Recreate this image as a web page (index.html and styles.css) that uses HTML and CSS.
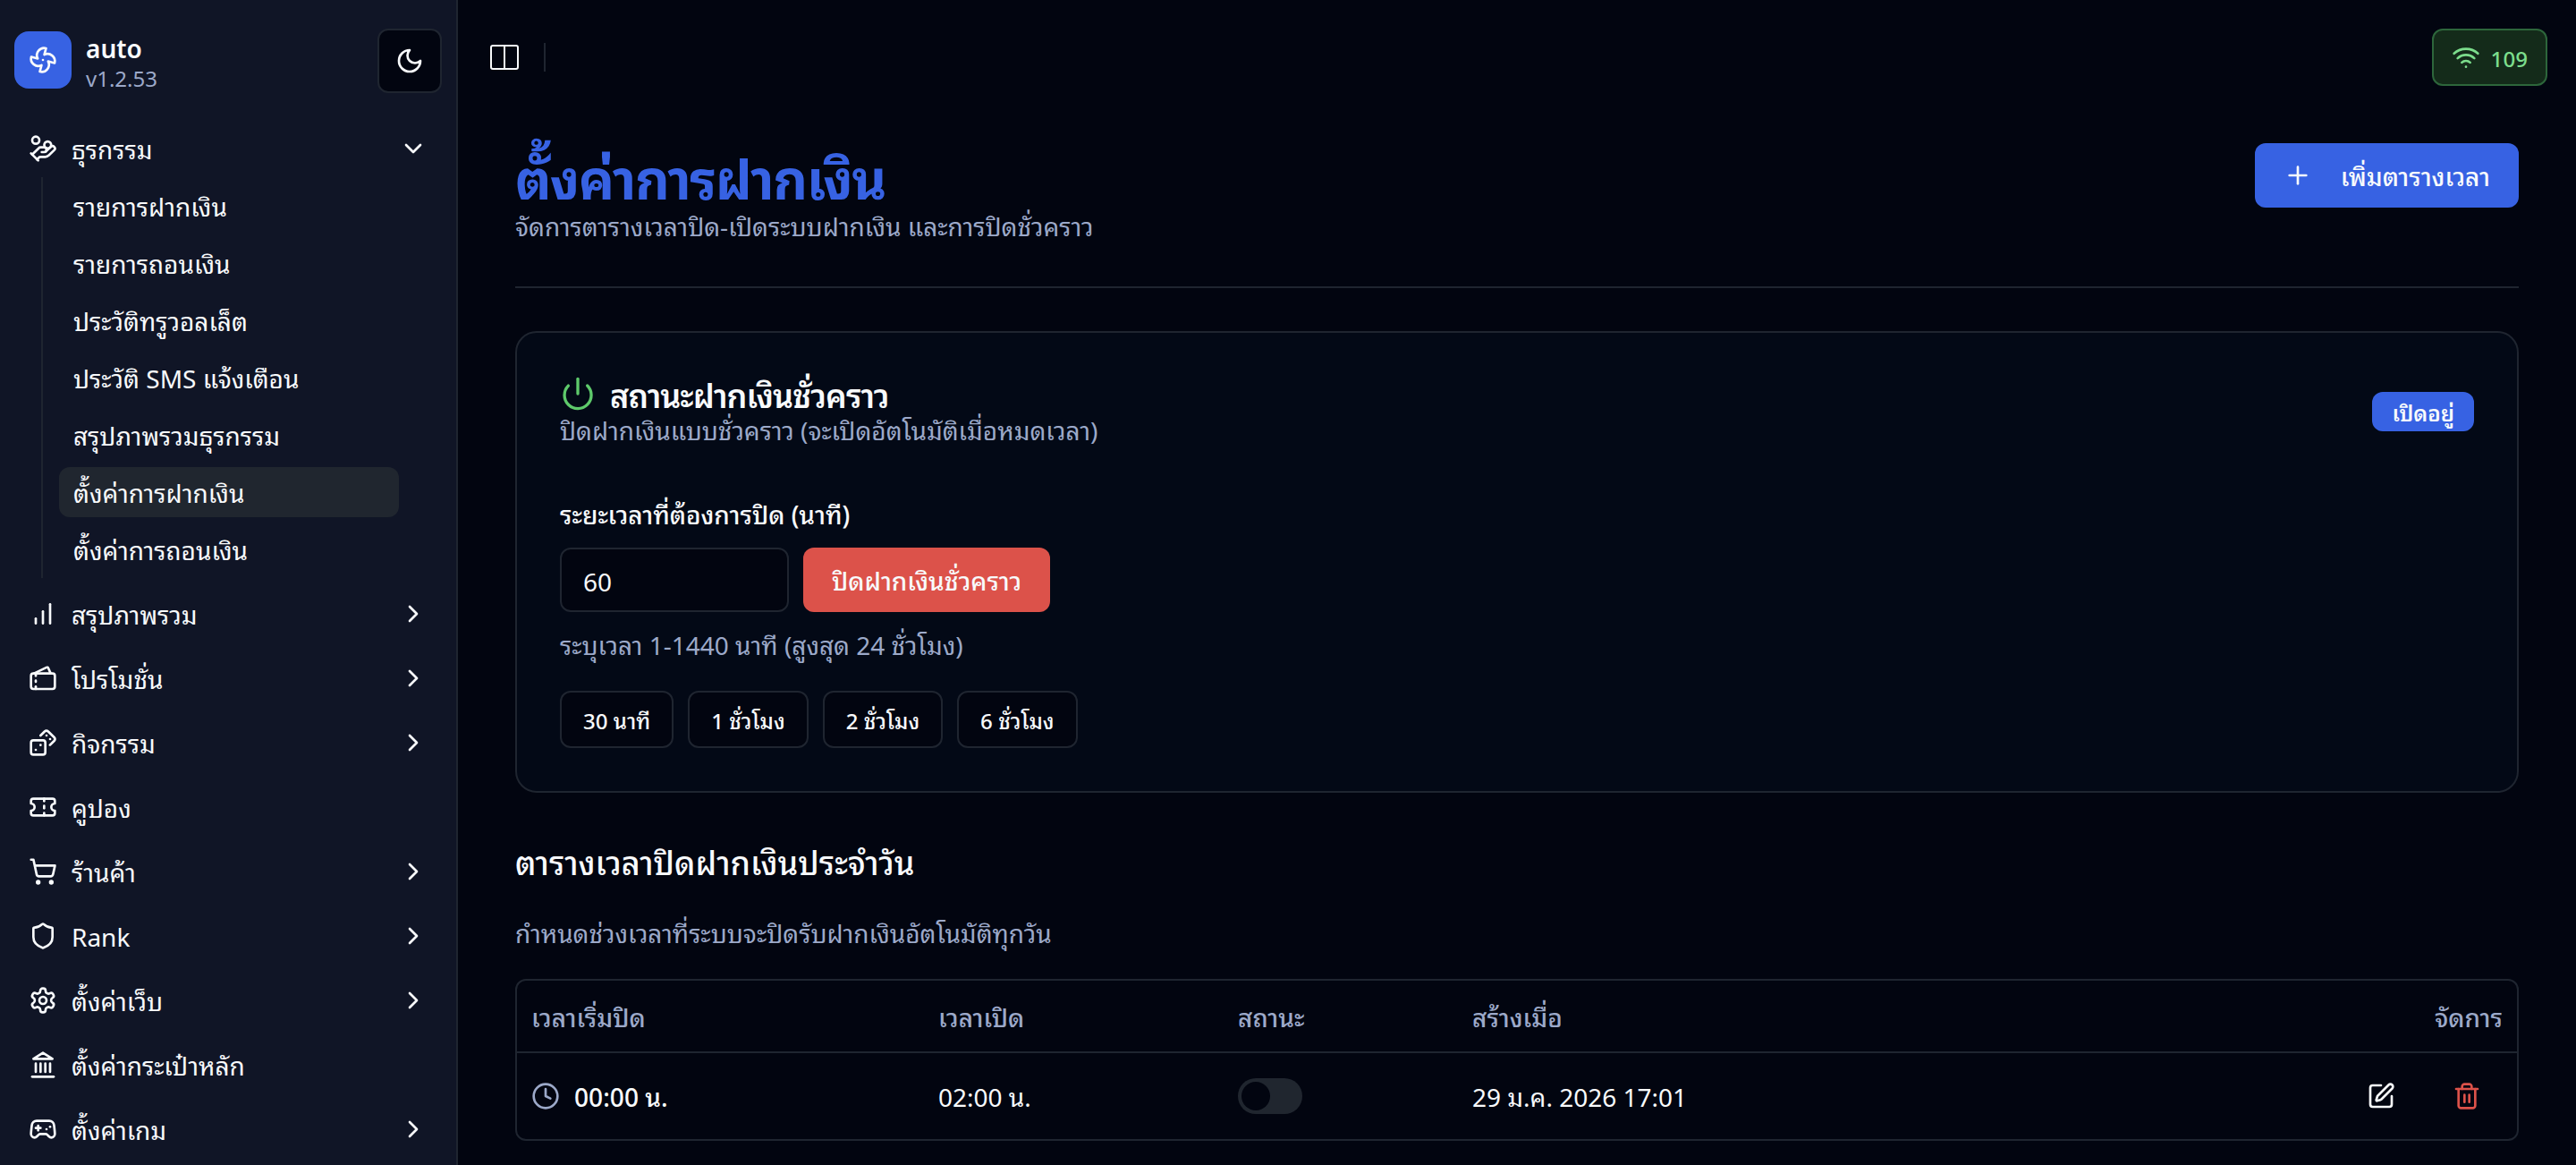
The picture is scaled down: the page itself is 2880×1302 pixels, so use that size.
FILE: index.html
```html
<!DOCTYPE html>
<html lang="th">
<head>
    <meta charset="UTF-8">
    <meta name="viewport" content="width=device-width, initial-scale=1.0">
    <title>ตั้งค่าการฝากเงิน</title>
    <link rel="stylesheet" href="styles.css">
</head>
<body>
    <div class="layout">
        <aside class="sidebar">
            <div class="brand">
                <div class="logo">
                    <svg class="icon" viewBox="0 0 24 24"><path d="M10.827 16.379a6.082 6.082 0 0 1-8.618-7.002l5.412 1.45a6.082 6.082 0 0 1 7.002-8.618l-1.45 5.412a6.082 6.082 0 0 1 8.618 7.002l-5.412-1.45a6.082 6.082 0 0 1-7.002 8.618l1.45-5.412Z"/><path d="M12 12v.01"/></svg>
                </div>
                <div class="brand-text">
                    <span class="brand-name">auto</span>
                    <span class="brand-version">v1.2.53</span>
                </div>
                <button class="theme-button">
                    <svg class="icon" viewBox="0 0 24 24"><path d="M12 3a6 6 0 0 0 9 9 9 9 0 1 1-9-9Z"/></svg>
                </button>
            </div>

            <nav class="menu">
                <a class="menu-item">
                    <svg class="icon" viewBox="0 0 24 24"><path d="M11 15h2a2 2 0 1 0 0-4h-3c-.6 0-1.1.2-1.4.6L3 17"/><path d="m7 21 1.6-1.4c.3-.4.8-.6 1.4-.6h4c1.1 0 2.1-.4 2.8-1.2l4.6-4.4a2 2 0 0 0-2.75-2.91l-4.2 3.9"/><path d="m2 16 6 6"/><circle cx="16" cy="9" r="2.9"/><circle cx="6" cy="5" r="3"/></svg>
                    <span>ธุรกรรม</span>
                    <svg class="icon chevron" viewBox="0 0 24 24"><path d="m6 9 6 6 6-6"/></svg>
                </a>
                <div class="submenu">
                    <a class="submenu-item"><span>รายการฝากเงิน</span></a>
                    <a class="submenu-item"><span>รายการถอนเงิน</span></a>
                    <a class="submenu-item"><span>ประวัติทรูวอลเล็ต</span></a>
                    <a class="submenu-item"><span>ประวัติ SMS แจ้งเตือน</span></a>
                    <a class="submenu-item"><span>สรุปภาพรวมธุรกรรม</span></a>
                    <a class="submenu-item active"><span>ตั้งค่าการฝากเงิน</span></a>
                    <a class="submenu-item"><span>ตั้งค่าการถอนเงิน</span></a>
                </div>
                <a class="menu-item">
                    <svg class="icon" viewBox="0 0 24 24"><path d="M12 20V10"/><path d="M18 20V4"/><path d="M6 20v-4"/></svg>
                    <span>สรุปภาพรวม</span>
                    <svg class="icon chevron" viewBox="0 0 24 24"><path d="m9 18 6-6-6-6"/></svg>
                </a>
                <a class="menu-item">
                    <svg class="icon" viewBox="0 0 24 24"><path d="m4.5 8 10.58-5.06a1 1 0 0 1 1.342.488L18.5 8"/><path d="M6 10V8"/><path d="M6 14v1"/><path d="M6 19v2"/><rect x="2" y="8" width="20" height="13" rx="2"/></svg>
                    <span>โปรโมชั่น</span>
                    <svg class="icon chevron" viewBox="0 0 24 24"><path d="m9 18 6-6-6-6"/></svg>
                </a>
                <a class="menu-item">
                    <svg class="icon" viewBox="0 0 24 24"><rect x="2" y="10" width="12" height="12" rx="2"/><path d="m17.92 14 3.5-3.5a2.24 2.24 0 0 0 0-3l-5-4.92a2.24 2.24 0 0 0-3 0L10 6"/><path d="M6 18h.01"/><path d="M10 14h.01"/><path d="M15 6h.01"/><path d="M18 9h.01"/></svg>
                    <span>กิจกรรม</span>
                    <svg class="icon chevron" viewBox="0 0 24 24"><path d="m9 18 6-6-6-6"/></svg>
                </a>
                <a class="menu-item">
                    <svg class="icon" viewBox="0 0 24 24"><path d="M2 9a3 3 0 0 1 0 6v2a2 2 0 0 0 2 2h16a2 2 0 0 0 2-2v-2a3 3 0 0 1 0-6V7a2 2 0 0 0-2-2H4a2 2 0 0 0-2 2Z"/><path d="M13 5v2"/><path d="M13 17v2"/><path d="M13 11v2"/></svg>
                    <span>คูปอง</span>
                </a>
                <a class="menu-item">
                    <svg class="icon" viewBox="0 0 24 24"><circle cx="8" cy="21" r="1"/><circle cx="19" cy="21" r="1"/><path d="M2.05 2.05h2l2.66 12.42a2 2 0 0 0 2 1.58h9.78a2 2 0 0 0 1.95-1.57l1.65-7.43H5.12"/></svg>
                    <span>ร้านค้า</span>
                    <svg class="icon chevron" viewBox="0 0 24 24"><path d="m9 18 6-6-6-6"/></svg>
                </a>
                <a class="menu-item">
                    <svg class="icon" viewBox="0 0 24 24"><path d="M20 13c0 5-3.5 7.5-7.66 8.95a1 1 0 0 1-.67-.01C7.5 20.5 4 18 4 13V6a1 1 0 0 1 1-1c2 0 4.5-1.2 6.24-2.72a1.17 1.17 0 0 1 1.52 0C14.51 3.81 17 5 19 5a1 1 0 0 1 1 1z"/></svg>
                    <span>Rank</span>
                    <svg class="icon chevron" viewBox="0 0 24 24"><path d="m9 18 6-6-6-6"/></svg>
                </a>
                <a class="menu-item">
                    <svg class="icon" viewBox="0 0 24 24"><path d="M12.22 2h-.44a2 2 0 0 0-2 2v.18a2 2 0 0 1-1 1.73l-.43.25a2 2 0 0 1-2 0l-.15-.08a2 2 0 0 0-2.73.73l-.22.38a2 2 0 0 0 .73 2.73l.15.1a2 2 0 0 1 1 1.72v.51a2 2 0 0 1-1 1.74l-.15.09a2 2 0 0 0-.73 2.73l.22.38a2 2 0 0 0 2.73.73l.15-.08a2 2 0 0 1 2 0l.43.25a2 2 0 0 1 1 1.73V20a2 2 0 0 0 2 2h.44a2 2 0 0 0 2-2v-.18a2 2 0 0 1 1-1.73l.43-.25a2 2 0 0 1 2 0l.15.08a2 2 0 0 0 2.73-.73l.22-.39a2 2 0 0 0-.73-2.73l-.15-.08a2 2 0 0 1-1-1.74v-.5a2 2 0 0 1 1-1.74l.15-.09a2 2 0 0 0 .73-2.73l-.22-.38a2 2 0 0 0-2.73-.73l-.15.08a2 2 0 0 1-2 0l-.43-.25a2 2 0 0 1-1-1.73V4a2 2 0 0 0-2-2z"/><circle cx="12" cy="12" r="3"/></svg>
                    <span>ตั้งค่าเว็บ</span>
                    <svg class="icon chevron" viewBox="0 0 24 24"><path d="m9 18 6-6-6-6"/></svg>
                </a>
                <a class="menu-item">
                    <svg class="icon" viewBox="0 0 24 24"><path d="M3 22h18"/><path d="M6 18v-7"/><path d="M10 18v-7"/><path d="M14 18v-7"/><path d="M18 18v-7"/><path d="m12 2 8 5H4z"/></svg>
                    <span>ตั้งค่ากระเป๋าหลัก</span>
                </a>
                <a class="menu-item">
                    <svg class="icon" viewBox="0 0 24 24"><path d="M6 11h4"/><path d="M8 9v4"/><path d="M15 12h.01"/><path d="M18 10h.01"/><path d="M17.32 5H6.68a4 4 0 0 0-3.978 3.59c-.006.052-.01.101-.017.152C2.604 9.416 2 14.456 2 16a3 3 0 0 0 3 3c1 0 1.5-.5 2-1l1.414-1.414A2 2 0 0 1 9.828 16h4.344a2 2 0 0 1 1.414.586L17 18c.5.5 1 1 2 1a3 3 0 0 0 3-3c0-1.545-.604-6.584-.685-7.258-.007-.05-.011-.1-.017-.151A4 4 0 0 0 17.32 5z"/></svg>
                    <span>ตั้งค่าเกม</span>
                    <svg class="icon chevron" viewBox="0 0 24 24"><path d="m9 18 6-6-6-6"/></svg>
                </a>
            </nav>
        </aside>

        <main class="main">
            <header class="topbar">
                <svg class="panel-icon" viewBox="0 0 32 28"><rect x="1" y="1" width="30" height="26" rx="2"/><path d="M16 1v26"/></svg>
                <span class="topbar-line"></span>
                <div class="online">
                    <svg class="icon" viewBox="0 0 24 24"><path d="M12 20h.01"/><path d="M2 8.82a15 15 0 0 1 20 0"/><path d="M5 12.859a10 10 0 0 1 14 0"/><path d="M8.5 16.429a5 5 0 0 1 7 0"/></svg>
                    <span>109</span>
                </div>
            </header>

            <div class="content">
                <div class="page-head">
                    <div>
                        <h1>ตั้งค่าการฝากเงิน</h1>
                        <p class="page-desc">จัดการตารางเวลาปิด-เปิดระบบฝากเงิน และการปิดชั่วคราว</p>
                    </div>
                    <button class="add-button">
                        <svg class="icon" viewBox="0 0 24 24"><path d="M5 12h14"/><path d="M12 5v14"/></svg>
                        <span>เพิ่มตารางเวลา</span>
                    </button>
                </div>

                <section class="card">
                    <div class="card-head">
                        <div>
                            <h2 class="card-title">
                                <svg class="icon" viewBox="0 0 24 24"><path d="M12 2v10"/><path d="M18.4 6.6a9 9 0 1 1-12.77.04"/></svg>
                                <span>สถานะฝากเงินชั่วคราว</span>
                            </h2>
                            <p class="card-desc">ปิดฝากเงินแบบชั่วคราว (จะเปิดอัตโนมัติเมื่อหมดเวลา)</p>
                        </div>
                        <span class="badge">เปิดอยู่</span>
                    </div>
                    <label class="label" for="minutes">ระยะเวลาที่ต้องการปิด (นาที)</label>
                    <div class="close-form">
                        <input class="input" id="minutes" type="text" value="60">
                        <button class="danger-button">ปิดฝากเงินชั่วคราว</button>
                    </div>
                    <p class="hint">ระบุเวลา 1-1440 นาที (สูงสุด 24 ชั่วโมง)</p>
                    <div class="presets">
                        <button class="preset">30 นาที</button>
                        <button class="preset">1 ชั่วโมง</button>
                        <button class="preset">2 ชั่วโมง</button>
                        <button class="preset">6 ชั่วโมง</button>
                    </div>
                </section>

                <section class="schedule">
                    <h3>ตารางเวลาปิดฝากเงินประจำวัน</h3>
                    <p class="schedule-desc">กำหนดช่วงเวลาที่ระบบจะปิดรับฝากเงินอัตโนมัติทุกวัน</p>
                    <div class="table">
                        <div class="row row-head">
                            <span>เวลาเริ่มปิด</span>
                            <span>เวลาเปิด</span>
                            <span>สถานะ</span>
                            <span>สร้างเมื่อ</span>
                            <span>จัดการ</span>
                        </div>
                        <div class="row">
                            <div class="start-time">
                                <svg class="icon" viewBox="0 0 24 24"><circle cx="12" cy="12" r="10"/><path d="M12 6v6l4 2"/></svg>
                                <span>00:00 น.</span>
                            </div>
                            <span>02:00 น.</span>
                            <div class="switch"><i class="switch-thumb"></i></div>
                            <span>29 ม.ค. 2026 17:01</span>
                            <div class="actions">
                                <button class="icon-button">
                                    <svg class="icon" viewBox="0 0 24 24"><path d="M12 3H5a2 2 0 0 0-2 2v14a2 2 0 0 0 2 2h14a2 2 0 0 0 2-2v-7"/><path d="M18.375 2.625a1 1 0 0 1 3 3l-9.013 9.014a2 2 0 0 1-.853.505l-2.873.84a.5.5 0 0 1-.62-.62l.84-2.873a2 2 0 0 1 .506-.852z"/></svg>
                                </button>
                                <button class="icon-button delete">
                                    <svg class="icon" viewBox="0 0 24 24"><path d="M3 6h18"/><path d="M19 6v14c0 1-1 2-2 2H7c-1 0-2-1-2-2V6"/><path d="M8 6V4c0-1 1-2 2-2h4c1 0 2 1 2 2v2"/><path d="M10 11v6"/><path d="M14 11v6"/></svg>
                                </button>
                            </div>
                        </div>
                    </div>
                </section>
            </div>
        </main>
    </div>
</body>
</html>
```
FILE: styles.css
```css
* {
    box-sizing: border-box;
    margin: 0;
    padding: 0;
}

body {
    background: #020510;
    color: #f8fafc;
    font-family: "Noto Sans Thai Looped", "Noto Sans", "Noto Sans Thai", sans-serif;
    font-size: 28px;
    line-height: 40px;
}

button {
    border: none;
    color: inherit;
    font: inherit;
    cursor: pointer;
}

.icon {
    width: 32px;
    height: 32px;
    flex-shrink: 0;
    fill: none;
    stroke: currentColor;
    stroke-width: 2;
    stroke-linecap: round;
    stroke-linejoin: round;
}

.layout {
    display: flex;
    height: 1302px;
    overflow: hidden;
}

/* sidebar */
.sidebar {
    width: 512px;
    flex-shrink: 0;
    padding: 32px 16px 0;
    background: #101526;
    border-right: 2px solid #1f2530;
}

.brand {
    display: flex;
    align-items: center;
    gap: 16px;
    margin-bottom: 30px;
}

.logo {
    display: flex;
    align-items: center;
    justify-content: center;
    width: 64px;
    height: 64px;
    margin-top: -2px;
    background: #3762e3;
    border-radius: 16px;
}

.brand-text {
    display: flex;
    flex: 1;
    flex-direction: column;
}

.brand-name {
    line-height: 35px;
    font-weight: 600;
}

.brand-version {
    color: #9ca9c9;
    font-size: 24px;
    line-height: 32px;
}

.theme-button {
    display: flex;
    align-items: center;
    justify-content: center;
    width: 72px;
    height: 72px;
    background: #020510;
    border: 2px solid #1f2530;
    border-radius: 12px;
}

.menu {
    display: flex;
    flex-direction: column;
    gap: 8px;
}

.menu-item {
    display: flex;
    align-items: center;
    gap: 16px;
    height: 64px;
    padding: 0 16px;
}

.chevron {
    margin-left: auto;
}

.submenu {
    display: flex;
    flex-direction: column;
    gap: 8px;
    margin: -8px 30px 0;
    padding: 4px 18px;
    border-left: 2px solid #1f2530;
}

.submenu-item {
    display: flex;
    align-items: center;
    height: 56px;
    padding: 0 16px;
    border-radius: 12px;
}

.submenu-item.active {
    background: #20262f;
}

/* top bar */
.main {
    flex: 1;
}

.topbar {
    display: flex;
    align-items: center;
    height: 128px;
    padding: 0 32px 0 36px;
}

.panel-icon {
    width: 32px;
    height: 28px;
    fill: none;
    stroke: #f8fafc;
    stroke-width: 2;
}

.topbar-line {
    width: 2px;
    height: 32px;
    margin-left: 28px;
    background: #1f2530;
}

.online {
    display: flex;
    align-items: center;
    gap: 12px;
    height: 64px;
    margin-left: auto;
    padding: 0 20px;
    background: #142b1a;
    border: 2px solid #2d663b;
    border-radius: 12px;
    color: #7cdd8c;
    font-size: 24px;
    font-weight: 500;
}

/* page */
.content {
    padding: 32px 64px 0;
}

.page-head {
    display: flex;
    align-items: flex-start;
    justify-content: space-between;
    padding-bottom: 48px;
    border-bottom: 2px solid #1f2530;
}

h1 {
    color: #3762e3;
    font-size: 60px;
    font-weight: 700;
    line-height: 72px;
    letter-spacing: -1.5px;
}

.page-desc,
.card-desc,
.hint,
.schedule-desc {
    color: #9ca9c9;
}

.add-button {
    display: flex;
    align-items: center;
    gap: 32px;
    height: 72px;
    padding: 0 32px;
    background: #3762e3;
    border-radius: 12px;
    font-weight: 500;
}

.card {
    margin-top: 48px;
    padding: 48px;
    background: #030916;
    border: 2px solid #1f2530;
    border-radius: 24px;
}

.card-head {
    display: flex;
    align-items: center;
    justify-content: space-between;
    margin-bottom: 54px;
}

.card-title {
    display: flex;
    align-items: center;
    gap: 16px;
    height: 40px;
    font-size: 36px;
    font-weight: 600;
    letter-spacing: -0.9px;
}

.card-title .icon {
    width: 40px;
    height: 40px;
    color: #5ec96b;
}

.badge {
    display: flex;
    align-items: center;
    height: 44px;
    padding: 0 22px;
    background: #3762e3;
    border-radius: 12px;
    font-size: 24px;
    font-weight: 600;
}

.label {
    display: block;
    margin-bottom: 18px;
    font-weight: 500;
}

.close-form {
    display: flex;
    gap: 16px;
}

.input {
    width: 256px;
    height: 72px;
    padding: 0 24px;
    background: #020510;
    border: 2px solid #1f2530;
    border-radius: 12px;
    color: inherit;
    font: inherit;
}

.danger-button {
    height: 72px;
    padding: 0 32px;
    background: #dc524a;
    border-radius: 12px;
    font-weight: 500;
}

.hint {
    margin-top: 16px;
}

.presets {
    display: flex;
    gap: 16px;
    margin-top: 32px;
}

.preset {
    height: 64px;
    padding: 0 24px;
    background: #020510;
    border: 2px solid #1f2530;
    border-radius: 12px;
    font-size: 24px;
    font-weight: 500;
}

/* schedule table */
.schedule {
    margin-top: 48px;
}

h3 {
    font-size: 36px;
    font-weight: 500;
    line-height: 56px;
}

.schedule-desc {
    margin: 32px 0;
}

.table {
    border: 2px solid #1f2530;
    border-radius: 12px;
}

.row {
    display: grid;
    grid-template-columns: 455px 335px 262px 1fr auto;
    align-items: center;
    height: 96px;
    padding: 0 16px;
}

.row-head {
    height: 81px;
    border-bottom: 2px solid #1f2530;
    color: #9ca9c9;
    font-weight: 500;
}

.start-time {
    display: flex;
    align-items: center;
    gap: 16px;
    font-weight: 500;
}

.start-time .icon {
    color: #9ca9c9;
}

.switch {
    display: flex;
    align-items: center;
    width: 72px;
    height: 40px;
    padding: 4px;
    background: #20262f;
    border-radius: 20px;
}

.switch-thumb {
    width: 32px;
    height: 32px;
    background: #020510;
    border-radius: 50%;
}

.actions {
    display: flex;
    gap: 16px;
}

.icon-button {
    display: flex;
    align-items: center;
    justify-content: center;
    width: 80px;
    height: 64px;
    background: none;
}

.delete {
    color: #dc524a;
}
```
